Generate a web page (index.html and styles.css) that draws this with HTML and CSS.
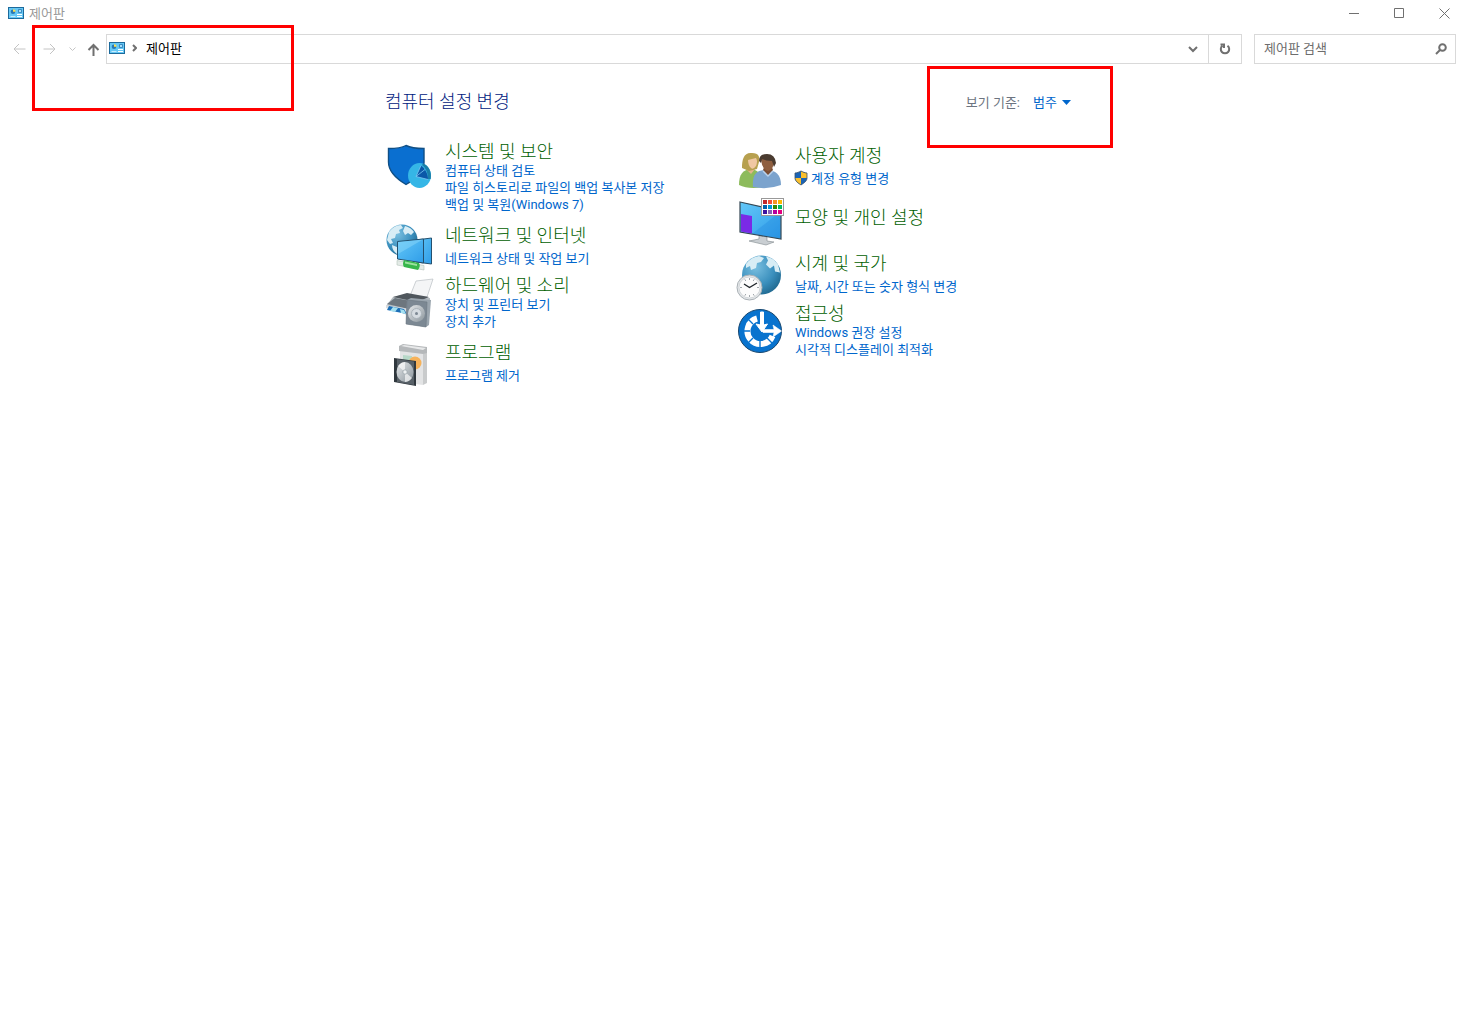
FILE: index.html
```html
<!DOCTYPE html>
<html lang="ko">
<head>
    <meta charset="UTF-8">
    <meta name="viewport" content="width=device-width, initial-scale=1.0">
    <title>제어판</title>
    <link rel="stylesheet" href="styles.css">
</head>
<body>
    <!-- Shared icons -->
    <svg class="sprite" aria-hidden="true">
        <symbol id="panel" viewBox="0 0 16 12">
            <rect x=".5" y=".5" width="15" height="11" fill="#66c8f5" stroke="#1c6a9c"/>
            <circle cx="5" cy="4.8" r="2.3" fill="#2a78b4"/>
            <path d="M5 4.800V2.200A2.600 2.600 0 0 1 7.600 4.800z" fill="#ffe14d"/>
            <path d="M10.500 2.500h3v3h-3z" fill="#a9e0fa" stroke="#2a78b4" stroke-width=".8"/>
            <path d="M2.500 9.500h5" stroke="#c9ecfc"/>
            <path d="M9 7.500h5M9 9.500h5" stroke="#fff"/>
        </symbol>
        <radialGradient id="globeFill" cx=".35" cy=".3" r=".8">
            <stop offset="0" stop-color="#79bfe0"/>
            <stop offset=".6" stop-color="#3a8fbd"/>
            <stop offset="1" stop-color="#1c6389"/>
        </radialGradient>
        <linearGradient id="screenFill" x1="0" y1="0" x2="1" y2="1">
            <stop offset="0" stop-color="#63c7f8"/>
            <stop offset="1" stop-color="#2f9de8"/>
        </linearGradient>
        <linearGradient id="metalFill" x1="0" y1="0" x2="1" y2="1">
            <stop offset="0" stop-color="#e6e9eb"/>
            <stop offset="1" stop-color="#8b959c"/>
        </linearGradient>
    </svg>

    <header class="titlebar">
        <svg class="panel-icon" aria-hidden="true"><use href="#panel"/></svg>
        <span class="titlebar-text">제어판</span>
        <div class="window-buttons">
            <button type="button" aria-label="최소화"><svg width="11" height="11" viewBox="0 0 11 11"><path d="M0 5.5h10"/></svg></button>
            <button type="button" aria-label="최대화"><svg width="11" height="11" viewBox="0 0 11 11"><path d="M.5.5h9v9h-9z"/></svg></button>
            <button type="button" aria-label="닫기"><svg width="11" height="11" viewBox="0 0 11 11"><path d="M.5.5l10 10M10.5.5l-10 10"/></svg></button>
        </div>
    </header>

    <nav class="toolbar">
        <div class="history">
            <button type="button" class="nav-btn" aria-label="뒤로" disabled><svg width="13" height="12" viewBox="0 0 13 12"><path d="M12.5 6H1M6 1L1 6l5 5"/></svg></button>
            <button type="button" class="nav-btn" aria-label="앞으로" disabled><svg width="13" height="12" viewBox="0 0 13 12"><path d="M.5 6H12M7 1l5 5-5 5"/></svg></button>
            <button type="button" class="nav-btn nav-recent" aria-label="최근 위치" disabled><svg width="7" height="5" viewBox="0 0 7 5"><path d="M.5.5l3 3 3-3"/></svg></button>
            <button type="button" class="nav-btn nav-up" aria-label="위로"><svg width="13" height="13" viewBox="0 0 13 13"><path d="M6.500 13V2M1.500 7l5-5 5 5"/></svg></button>
        </div>
        <div class="address">
            <div class="breadcrumb">
                <svg class="panel-icon" aria-hidden="true"><use href="#panel"/></svg>
                <svg class="crumb-arrow" width="5" height="8" viewBox="0 0 5 8"><path d="M1 1l3 3-3 3"/></svg>
                <a href="#">제어판</a>
            </div>
            <button type="button" class="address-btn" aria-label="이전 위치"><svg width="10" height="7" viewBox="0 0 10 7"><path d="M1 1l4 4 4-4"/></svg></button>
            <button type="button" class="address-btn refresh" aria-label="새로 고침"><svg width="12" height="12" viewBox="0 0 12 12"><path d="M8.500 2.800A4.200 4.200 0 1 1 3.500 2.800M1.500 1.500H5V5"/></svg></button>
        </div>
        <form class="search">
            <input type="text" placeholder="제어판 검색" aria-label="제어판 검색">
            <button type="button" aria-label="검색"><svg width="12" height="12" viewBox="0 0 12 12"><circle cx="7.500" cy="4.500" r="3.300"/><path d="M5 7L1 11"/></svg></button>
        </form>
    </nav>

    <main class="content">
        <div class="content-head">
            <h1>컴퓨터 설정 변경</h1>
            <div class="view-by">
                <label for="viewBy">보기 기준:</label>
                <select id="viewBy">
                    <option>범주</option>
                </select>
                <svg width="9" height="5" viewBox="0 0 9 5" aria-hidden="true"><path d="M0 0h9L4.500 5z" fill="#0066cc"/></svg>
            </div>
        </div>

        <div class="columns">
            <div class="column">
                <section class="category top">
                    <svg class="icon" viewBox="0 0 48 48">
                        <path d="M21 3.500c5 2.500 11 3 18 3v14c0 10-8 16-18 22C11 36.500 3.500 30 3.500 20V6.500c7 0 13-.5 17.500-3z" fill="#0a6fd0" stroke="#104f85" stroke-width="1.400"/>
                        <ellipse cx="34.500" cy="33.500" rx="11.500" ry="12.500" fill="#35b6e6"/>
                        <path d="M38 21.600c6 2 9 9 7.700 15.400L43 37c0-6-2-11-6-14z" fill="#1a7ea8"/>
                        <path d="M36 23.500l-5 11 12 3c0-6-3-11-7-14z" fill="#0b57a8"/>
                        <path d="M36 23.500l-5 11 12 3M31 34.500l9-7" fill="none" stroke="#7cc8f4" stroke-width=".8"/>
                    </svg>
                    <div class="category-text">
                        <h2><a href="#">시스템 및 보안</a></h2>
                        <ul>
                            <li><a href="#">컴퓨터 상태 검토</a></li>
                            <li><a href="#">파일 히스토리로 파일의 백업 복사본 저장</a></li>
                            <li><a href="#">백업 및 복원(Windows 7)</a></li>
                        </ul>
                    </div>
                </section>

                <section class="category short spaced">
                    <svg class="icon" viewBox="0 0 48 48">
                        <circle cx="17" cy="18" r="15.500" fill="url(#globeFill)"/>
                        <path d="M4 10c3-4 7-7 12-7l2 3-4 2 1 3-4 1-1 4-4 1 2 4-3 1-3-4zM20 4c4 1 7 3 9 6l-3 3-3-2-3 2-2-4zM7 23l5 2 3 4-3 3c-3-2-5-5-5-9z" fill="#d8edf5"/>
                        <path d="M31 18l15.500-2v26L31 40z" fill="url(#screenFill)" stroke="#24506e"/>
                        <path d="M12.500 19.500l26-2.500v24l-26-4z" fill="url(#screenFill)" stroke="#24506e"/>
                        <path d="M13 20l25-2.500L13 32z" fill="#8cd7fa" opacity=".5"/>
                        <path d="M12 38.500l27 5V48l-27-5z" fill="#e4ebe7" stroke="#b4c3ba" stroke-width=".6"/>
                        <path d="M19 38l15 3q2 3-1 7l-14-3q-2-3 0-7z" fill="#37b64b"/>
                        <path d="M20 39.500l12 2.500v2l-12-2.500z" fill="#9be29d"/>
                    </svg>
                    <div class="category-text">
                        <h2><a href="#">네트워크 및 인터넷</a></h2>
                        <ul>
                            <li><a href="#">네트워크 상태 및 작업 보기</a></li>
                        </ul>
                    </div>
                </section>

                <section class="category">
                    <svg class="icon" viewBox="0 0 48 48">
                        <path d="M31 2l17-2-6 18-17-1z" fill="#f4f5f6" stroke="#b9bfc3" stroke-width=".7"/>
                        <path d="M8 18l14-3 23 4v10l-23 7L1 27z" fill="#b4bbc0"/>
                        <path d="M8 18l14-4 22 4-12 5z" fill="#50575d"/>
                        <path d="M2 25l8-6 21 4-7 7z" fill="#6d767e"/>
                        <path d="M1 26l23 4v5L1 29z" fill="#d8dcdf"/>
                        <path d="M4 27l15 3 3 5-20-4z" fill="#1c6fb7"/>
                        <path d="M8 28l5 1-3 4-5-1zM15 30l4 1 2 4-5-1z" fill="#a5e0f0"/>
                        <path d="M22 21l4-2 20 2-2 25-3 2-20-3z" fill="#9aa5ae"/>
                        <path d="M22 21l20 2-1 25-20-3z" fill="#7c8893" stroke="#6b7782" stroke-width=".6"/>
                        <circle cx="31.500" cy="34.500" r="8.500" fill="url(#metalFill)"/>
                        <circle cx="31.500" cy="34.500" r="5" fill="#d6dce1" stroke="#aab3ba"/>
                        <circle cx="31.500" cy="34.500" r="1.500" fill="#7c8893"/>
                    </svg>
                    <div class="category-text">
                        <h2><a href="#">하드웨어 및 소리</a></h2>
                        <ul>
                            <li><a href="#">장치 및 프린터 보기</a></li>
                            <li><a href="#">장치 추가</a></li>
                        </ul>
                    </div>
                </section>

                <section class="category short spaced">
                    <svg class="icon" viewBox="0 0 48 48">
                        <path d="M15 10l23 3v33l-23-3z" fill="#e3e4e5"/>
                        <path d="M38 13l4-2v33l-4 2z" fill="#c9cbcc"/>
                        <path d="M14 7l4-2 24 3v6l-4 1-24-3z" fill="#b5b8ba"/>
                        <path d="M16 7l3-1 22 3-3 2z" fill="#e8e9ea"/>
                        <path d="M18 16l9 1v9l-9 2z" fill="#b7d8c8"/>
                        <circle cx="30" cy="24" r="6.500" fill="#f6b25a"/>
                        <path d="M9 19l22 3v25L9 43z" fill="#30383e"/>
                        <path d="M12 20l17 2.500V46l-17-3z" fill="#586168"/>
                        <ellipse cx="20" cy="33" rx="8.500" ry="10" fill="url(#metalFill)"/>
                        <path d="M20 33l-7-6q3-4 7-4zM20 33l7 6q-3 4-7 4z" fill="#fff" opacity=".65"/>
                        <circle cx="20" cy="33" r="2.200" fill="#eef1f2" stroke="#9ba5ab" stroke-width=".8"/>
                    </svg>
                    <div class="category-text">
                        <h2><a href="#">프로그램</a></h2>
                        <ul>
                            <li><a href="#">프로그램 제거</a></li>
                        </ul>
                    </div>
                </section>
            </div>

            <div class="column">
                <section class="category short">
                    <svg class="icon" viewBox="0 0 48 48">
                        <path d="M4 43c0-10 3-15 12-16 8 1 10 5 11 18-8 2-17 1-23-2z" fill="#8dbb5c"/>
                        <path d="M11 27l5 5 4-5-1-4h-7z" fill="#e3b48c"/>
                        <path d="M7 26c0-9 2-16 10-15 7 0 8 4 7 9l-2 7-8 2z" fill="#b7a04f"/>
                        <path d="M13 18l8-2q2 3 0 8-3 4-5 2-3-3-3-8z" fill="#f0c7a2"/>
                        <path d="M18 45c-1-12 3-17 13-17 10 0 15 5 15 15q-13 5-28 2z" fill="#7ba3cd"/>
                        <path d="M28 28l5 6 5-6-2-5h-6z" fill="#7a4e34"/>
                        <path d="M26 18q0-5 6-5 7 0 7 6 0 8-6 10-6-2-7-11z" fill="#8f5f40"/>
                        <path d="M24 19q0-7 8-7 8 0 9 9l-2 4-2-6q-6 0-10-2l-1 4z" fill="#4a3b30"/>
                        <path d="M28 29l5 5 5-5" fill="none" stroke="#b9d2ec" stroke-width="1.500"/>
                    </svg>
                    <div class="category-text">
                        <h2><a href="#">사용자 계정</a></h2>
                        <ul>
                            <li class="with-shield">
                                <svg width="14" height="16" viewBox="0 0 14 16" aria-hidden="true">
                                    <path d="M7 1c2 1 4 2 6 2v5c0 3-3 5-6 7-3-2-6-4-6-7V3c2 0 4-1 6-2z" fill="#1b64b5"/>
                                    <path d="M7 1c2 1 4 2 6 2v5H7zM7 8v7C4 13 1 11 1 8z" fill="#fbc02d"/>
                                    <path d="M7 1c2 1 4 2 6 2v5c0 3-3 5-6 7-3-2-6-4-6-7V3c2 0 4-1 6-2z" fill="none" stroke="#37516b" stroke-width=".8"/>
                                </svg>
                                <a href="#">계정 유형 변경</a>
                            </li>
                        </ul>
                    </div>
                </section>

                <section class="category short">
                    <svg class="icon" viewBox="0 0 48 48">
                        <path d="M24 39l8 2v4l7 1-8 3-17-4 10-2z" fill="#c9ced2" stroke="#80888d" stroke-width=".6"/>
                        <path d="M5 6l41 9v28L5 36z" fill="url(#screenFill)" stroke="#344753" stroke-width="1.200"/>
                        <path d="M6 18l11 2v17.500L6 35.500z" fill="#7a2ae6"/>
                        <path d="M17 38l28-22v26z" fill="#1478d8" opacity=".25"/>
                        <rect x="26.500" y="2.500" width="22" height="17" fill="#fff" stroke="#999"/>
                        <path d="M28 4h4v4h-4z" fill="#c1272d"/><path d="M33 4h4v4h-4z" fill="#f04e37"/><path d="M38 4h4v4h-4z" fill="#f79324"/><path d="M43 4h4v4h-4z" fill="#fbb900"/>
                        <path d="M28 9h4v4h-4z" fill="#0062ae"/><path d="M33 9h4v4h-4z" fill="#0098d8"/><path d="M38 9h4v4h-4z" fill="#388700"/><path d="M43 9h4v4h-4z" fill="#00ba60"/>
                        <path d="M28 14h4v4h-4z" fill="#3d14a0"/><path d="M33 14h4v4h-4z" fill="#8861b5"/><path d="M38 14h4v4h-4z" fill="#b4009e"/><path d="M43 14h4v4h-4z" fill="#e3007f"/>
                    </svg>
                    <div class="category-text">
                        <h2><a href="#">모양 및 개인 설정</a></h2>
                    </div>
                </section>

                <section class="category short">
                    <svg class="icon" viewBox="0 0 48 48">
                        <circle cx="26.500" cy="25" r="19.500" fill="url(#globeFill)"/>
                        <path d="M11 14q5-7 13-8l5 2-3 4-4 1-1 5-5 2-1-4-4 2zM31 6.500q7 1 12 8l2 8-5-1-1-6-4 3-4-4 2-4z" fill="#d8edf5"/>
                        <circle cx="14.500" cy="37.500" r="12.500" fill="#e3e6e8" stroke="#a9b0b5"/>
                        <circle cx="14.500" cy="37.500" r="10.500" fill="#fcfcfc" stroke="#c6cbd0" stroke-width=".7"/>
                        <path d="M14.500 28v2M14.500 45v2M5 37.500h2M22 37.500h2M9.800 29.300l1 1.700M19.200 29.300l-1 1.700M9.800 45.700l1-1.700M19.200 45.700l-1-1.700" stroke="#a1a7ac"/>
                        <path d="M9 34l5.500 3.500L22 33" fill="none" stroke="#20262a" stroke-width="1.400"/>
                    </svg>
                    <div class="category-text">
                        <h2><a href="#">시계 및 국가</a></h2>
                        <ul>
                            <li><a href="#">날짜, 시간 또는 숫자 형식 변경</a></li>
                        </ul>
                    </div>
                </section>

                <section class="category">
                    <svg class="icon" viewBox="0 0 48 48">
                        <circle cx="25" cy="24" r="21.500" fill="#0873ce" stroke="#17466e"/>
                        <path d="M22 11.500A13 13 0 1 0 37.500 29" fill="none" stroke="#fff" stroke-width="6"/>
                        <path d="M8 24h7M13 12l5 5M13 36l5-5M25 41v-7M37 36l-5-5" stroke="#0873ce" stroke-width="1.400"/>
                        <path d="M27 5v15" stroke="#0873ce" stroke-width="7"/>
                        <path d="M25.500 5h3v13l4-1-5.500 8-6-8 4.500 1z" fill="#fff" stroke="#fff"/>
                        <path d="M28 22.500h11l-1-4.500 8.500 6-8.500 6 1-4.500H28z" fill="#fff" stroke="#fff" stroke-width=".6"/>
                    </svg>
                    <div class="category-text">
                        <h2><a href="#">접근성</a></h2>
                        <ul>
                            <li><a href="#">Windows 권장 설정</a></li>
                            <li><a href="#">시각적 디스플레이 최적화</a></li>
                        </ul>
                    </div>
                </section>
            </div>
        </div>
    </main>

    <!-- Red highlight frames -->
    <div class="highlight highlight-address"></div>
    <div class="highlight highlight-view"></div>
</body>
</html>
```

FILE: styles.css
```css
* {
    box-sizing: border-box;
}

body {
    position: relative;
    margin: 0;
    min-height: 100vh;
    background-color: #fff;
    color: #000;
    font-family: Roboto, "Noto Sans CJK KR", sans-serif;
    font-size: 13px;
    line-height: 17px;
}

a {
    color: #0066cc;
    text-decoration: none;
}

a:hover {
    text-decoration: underline;
}

button {
    display: flex;
    align-items: center;
    justify-content: center;
    padding: 0;
    border: none;
    background: none;
}

button svg,
.crumb-arrow {
    fill: none;
    stroke: #707070;
}

.sprite {
    position: absolute;
    width: 0;
    height: 0;
}

.panel-icon {
    width: 16px;
    height: 12px;
}

/* Title bar */
.titlebar {
    display: flex;
    align-items: center;
    height: 26px;
    padding-left: 8px;
}

.titlebar-text {
    margin-left: 5px;
    color: #999;
}

.window-buttons {
    display: flex;
    margin-left: auto;
}

.window-buttons button {
    width: 45px;
    height: 26px;
}

/* Toolbar */
.toolbar {
    display: flex;
    align-items: center;
    margin-top: 8px;
    padding: 0 11px 0 4px;
}

.history {
    display: flex;
    width: 102px;
}

.nav-btn {
    width: 30px;
    height: 30px;
}

.nav-btn:disabled svg {
    stroke: #c4c4c4;
}

.nav-recent {
    width: 16px;
}

.nav-up {
    width: 26px;
}

.nav-up svg,
.crumb-arrow,
.address-btn svg,
.search svg {
    stroke-width: 2;
}

.address {
    display: flex;
    flex: 1;
    height: 30px;
    border: 1px solid #d9d9d9;
}

.breadcrumb {
    display: flex;
    flex: 1;
    align-items: center;
    padding: 0 0 2px 2px;
}

.breadcrumb a {
    margin-left: 9px;
    color: #000;
}

.crumb-arrow {
    margin-left: 7px;
}

.address-btn {
    width: 30px;
}

.refresh {
    width: 33px;
    border-left: 1px solid #d9d9d9;
}

.search {
    display: flex;
    width: 202px;
    height: 30px;
    margin-left: 12px;
    border: 1px solid #d9d9d9;
}

.search input {
    flex: 1;
    min-width: 0;
    padding: 0 0 2px 9px;
    border: none;
    outline: none;
    font: inherit;
}

.search input::placeholder {
    color: #6d6d6d;
}

.search button {
    width: 28px;
}

/* Content */
.content {
    max-width: 697px;
    margin: 0 auto;
    padding-top: 26px;
}

.content-head {
    display: flex;
    align-items: center;
    justify-content: space-between;
    height: 24px;
    padding-right: 11px;
}

h1,
h2 {
    margin: 0;
    font-size: 18px;
    font-weight: 300;
    line-height: 20px;
}

h1 {
    color: #002080;
}

h2 a {
    color: #006000;
}

.view-by {
    display: flex;
    align-items: center;
    color: #6d7480;
}

.view-by select {
    margin: 0 5px 0 13px;
    padding: 0;
    border: none;
    background: none;
    appearance: none;
    color: #0066cc;
    font: inherit;
}

.columns {
    display: grid;
    grid-template-columns: 350px 1fr;
    margin-top: 28px;
}

.column {
    display: flex;
    flex-direction: column;
    gap: 6px;
}

.category {
    display: flex;
    align-items: center;
    gap: 12px;
}

.category.top {
    align-items: flex-start;
}

.category.spaced {
    margin-top: 3px;
}

.category.short h2 {
    margin-bottom: 4px;
}

.icon {
    flex: none;
    width: 48px;
    height: 48px;
    overflow: visible;
}

.category ul {
    margin: 0;
    padding: 0;
    list-style: none;
}

.with-shield {
    display: flex;
    align-items: center;
    gap: 3px;
    height: 17px;
    margin-left: -1px;
}

/* Highlight frames lie over the window */
.highlight {
    position: absolute;
    border: 3px solid #f00;
    pointer-events: none;
}

.highlight-address {
    top: 25px;
    left: 32px;
    width: 262px;
    height: 86px;
}

.highlight-view {
    top: 66px;
    left: 927px;
    width: 186px;
    height: 82px;
}
```
